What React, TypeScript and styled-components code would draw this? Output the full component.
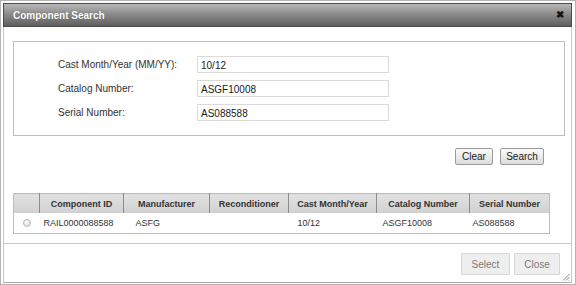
import React, { useState } from "react";
import styled, { createGlobalStyle } from "styled-components";

const GlobalStyle = createGlobalStyle`
  html, body {
    margin: 0;
    padding: 0;
    background: #ffffff;
  }
  body {
    font-family: "Liberation Sans", Arial, sans-serif;
    color: #333333;
  }
`;

type Result = {
  componentId: string;
  manufacturer: string;
  reconditioner: string;
  castMonthYear: string;
  catalogNumber: string;
  serialNumber: string;
};

type ColumnKey = keyof Result | "radio";

// indent = where the data text sits inside its column
const columns: { key: ColumnKey; title: string; width: number; indent: number }[] = [
  { key: "radio", title: "", width: 26, indent: 9 },
  { key: "componentId", title: "Component ID", width: 84, indent: 4 },
  { key: "manufacturer", title: "Manufacturer", width: 86, indent: 12 },
  { key: "reconditioner", title: "Reconditioner", width: 79, indent: 8 },
  { key: "castMonthYear", title: "Cast Month/Year", width: 88, indent: 9 },
  { key: "catalogNumber", title: "Catalog Number", width: 93, indent: 6 },
  { key: "serialNumber", title: "Serial Number", width: 80, indent: 3 },
];

const results: Result[] = [
  {
    componentId: "RAIL0000088588",
    manufacturer: "ASFG",
    reconditioner: "",
    castMonthYear: "10/12",
    catalogNumber: "ASGF10008",
    serialNumber: "AS088588",
  },
];

const ComponentSearch = () => {
  const [castMonthYear, setCastMonthYear] = useState<string>("10/12");
  const [catalogNumber, setCatalogNumber] = useState<string>("ASGF10008");
  const [serialNumber, setSerialNumber] = useState<string>("AS088588");

  return (
    <Dialog>
      <TitleBar>
        <Title>Component Search</Title>
        <CloseIcon>&#10006;</CloseIcon>
      </TitleBar>
      <Body>
        <CriteriaBox>
          <FieldRow>
            <FieldLabel>Cast Month/Year (MM/YY):</FieldLabel>
            <TextInput
              value={castMonthYear}
              onChange={(e) => setCastMonthYear(e.target.value)}
            />
          </FieldRow>
          <FieldRow>
            <FieldLabel>Catalog Number:</FieldLabel>
            <TextInput
              value={catalogNumber}
              onChange={(e) => setCatalogNumber(e.target.value)}
            />
          </FieldRow>
          <FieldRow>
            <FieldLabel>Serial Number:</FieldLabel>
            <TextInput
              value={serialNumber}
              onChange={(e) => setSerialNumber(e.target.value)}
            />
          </FieldRow>
        </CriteriaBox>
        <SearchActions>
          <SmallButton $width={38}>Clear</SmallButton>
          <SmallButton $width={44}>Search</SmallButton>
        </SearchActions>
        <ResultTable>
          <colgroup>
            {columns.map((c) => (
              <col key={c.key} style={{ width: c.width }} />
            ))}
          </colgroup>
          <thead>
            <tr>
              {columns.map((c) => (
                <HeaderCell key={c.key}>{c.title}</HeaderCell>
              ))}
            </tr>
          </thead>
          <tbody>
            {results.map((r) => (
              <tr key={r.componentId}>
                {columns.map((c) => (
                  <DataCell key={c.key} $indent={c.indent}>
                    {c.key === "radio" ? <Radio /> : r[c.key]}
                  </DataCell>
                ))}
              </tr>
            ))}
          </tbody>
        </ResultTable>
      </Body>
      <Footer>
        <FooterButton $width={49} disabled>
          Select
        </FooterButton>
        <FooterButton $width={46}>Close</FooterButton>
        <ResizeGrip viewBox="0 0 8 8">
          <path d="M7.5 1 L1 7.5 M7.5 4 L4 7.5 M7.5 7 L7 7.5" stroke="#888" strokeWidth="1" />
        </ResizeGrip>
      </Footer>
    </Dialog>
  );
};

const App = () => (
  <>
    <GlobalStyle />
    <ComponentSearch />
  </>
);

const Dialog = styled.div`
  position: relative;
  display: flex;
  flex-direction: column;
  box-sizing: border-box;
  width: 576px;
  height: 285px;
  padding: 2px 3px 1px 2px;
  border: 1px solid #b4b4b4;
  background: #ffffff;
`;

const TitleBar = styled.div`
  display: flex;
  align-items: center;
  justify-content: space-between;
  box-sizing: border-box;
  height: 24px;
  padding: 0 7px 0 9px;
  border: 1px solid #4a4a4a;
  background: linear-gradient(#b8b8b8 0%, #8c8c8c 45%, #5e5e5e 100%);
`;

const Title = styled.span`
  font-weight: 700;
  font-size: 10px;
  color: #ffffff;
  text-shadow: 0 0 1px #555;
`;

const CloseIcon = styled.span`
  font-size: 10px;
  font-weight: 700;
  color: #141414;
  line-height: 1;
`;

const Body = styled.div`
  display: flex;
  flex-direction: column;
  flex: 1;
  padding: 14px 6px 0 9px;
  border-left: 1px solid #c8c8c8;
  border-right: 1px solid #c8c8c8;
`;

const CriteriaBox = styled.div`
  display: flex;
  flex-direction: column;
  gap: 7px;
  box-sizing: border-box;
  height: 95px;
  padding: 14px 0 0 44px;
  border: 1px solid #bdbdbd;
`;

const FieldRow = styled.div`
  display: flex;
  align-items: center;
`;

const FieldLabel = styled.span`
  width: 139px;
  font-size: 10px;
  color: #333333;
`;

const TextInput = styled.input`
  box-sizing: border-box;
  width: 192px;
  height: 17px;
  padding: 1px 3px 0;
  border: 1px solid #dadada;
  font-family: "Liberation Sans", Arial, sans-serif;
  font-size: 10px;
  color: #222222;
  outline: none;
`;

const SearchActions = styled.div`
  display: flex;
  justify-content: flex-end;
  gap: 7px;
  margin-top: 12px;
  padding-right: 21px;
`;

const SmallButton = styled.button<{ $width: number }>`
  box-sizing: border-box;
  width: ${(p) => p.$width}px;
  height: 17px;
  padding: 0;
  border: 1px solid #9a9a9a;
  border-radius: 2px;
  background: linear-gradient(#fafafa, #dcdcdc);
  font-family: "Liberation Sans", Arial, sans-serif;
  font-size: 10px;
  color: #222222;
`;

const ResultTable = styled.table`
  width: 537px;
  margin-top: 28px;
  border-collapse: collapse;
  table-layout: fixed;
  border: 1px solid #bdbdbd;
`;

const HeaderCell = styled.th`
  height: 19px;
  padding: 0;
  border-left: 1px solid #8c8c8c;
  background: linear-gradient(#e2e2e2, #d0d0d0);
  font-size: 9px;
  font-weight: 700;
  color: #333333;
  text-align: center;
  white-space: nowrap;

  &:first-child {
    border-left: none;
  }
`;

const DataCell = styled.td<{ $indent: number }>`
  height: 20px;
  padding: 0 0 0 ${(p) => p.$indent}px;
  font-size: 9px;
  color: #333333;
  white-space: nowrap;
`;

const Radio = styled.span`
  display: block;
  box-sizing: border-box;
  width: 8px;
  height: 8px;
  border: 1px solid #b8b8b8;
  border-radius: 50%;
  background: radial-gradient(circle at 40% 35%, #ffffff, #d2d2d2);
`;

const Footer = styled.div`
  position: relative;
  display: flex;
  justify-content: flex-end;
  gap: 4px;
  box-sizing: border-box;
  height: 40px;
  padding: 9px 11px 0 0;
  border-top: 1px solid #c8c8c8;
  border-left: 1px solid #c8c8c8;
  border-right: 1px solid #c8c8c8;
  border-bottom: 1px solid #a8a8a8;
`;

const FooterButton = styled.button<{ $width: number }>`
  box-sizing: border-box;
  width: ${(p) => p.$width}px;
  height: 22px;
  padding: 0;
  border: 1px solid #d6d6d6;
  border-radius: 1px;
  background: #eeeeee;
  font-family: "Liberation Sans", Arial, sans-serif;
  font-size: 10px;
  color: #7a7a7a;
`;

const ResizeGrip = styled.svg`
  position: absolute;
  right: 1px;
  bottom: 1px;
  width: 8px;
  height: 8px;
`;

export default App;
